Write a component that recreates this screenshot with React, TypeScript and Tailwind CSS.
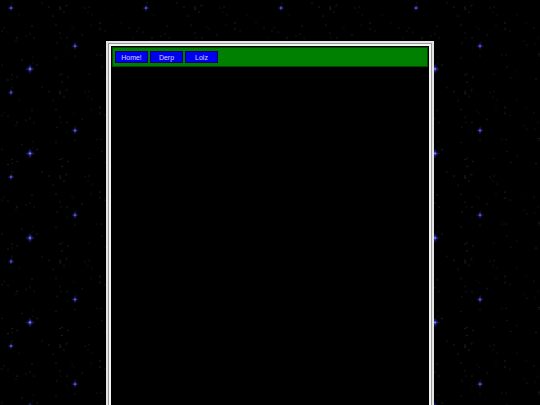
import React from "react";

// dim specks inside one background tile (135 x 84.5), fixed so every run looks the same
const specks: [number, number, number][] = [];
let seed = 7;
const rnd = () => {
  seed = (seed * 9301 + 49297) % 233280;
  return seed / 233280;
};
for (let i = 0; i < 70; i++) {
  specks.push([Math.round(rnd() * 134) + 0.5, Math.round(rnd() * 84) + 0.5, 0.15 + rnd() * 0.3]);
}

function Star({ x, y, size }: { x: number; y: number; size: number }) {
  return (
    <g>
      <circle cx={x} cy={y} r={size * 1.8} fill="url(#glow)" />
      <line x1={x - size * 2.2} y1={y} x2={x + size * 2.2} y2={y} stroke="#4848ff" strokeWidth={0.6} strokeOpacity={0.6} />
      <line x1={x} y1={y - size * 2.2} x2={x} y2={y + size * 2.2} stroke="#4848ff" strokeWidth={0.6} strokeOpacity={0.6} />
      <circle cx={x} cy={y} r={size * 0.4} fill="#a0a0ff" />
    </g>
  );
}

function StarField() {
  return (
    <svg className="absolute inset-0 h-full w-full" xmlns="http://www.w3.org/2000/svg">
      <defs>
        <radialGradient id="glow">
          <stop offset="0%" stopColor="#5c5cff" stopOpacity="0.9" />
          <stop offset="100%" stopColor="#2020a0" stopOpacity="0" />
        </radialGradient>
        <pattern id="stars" width="135" height="84.5" patternUnits="userSpaceOnUse">
          {specks.map(([x, y, o], i) => (
            <rect key={i} x={x} y={y} width="1" height="1" fill="#8a8aa0" opacity={o} />
          ))}
          <Star x={11} y={8} size={1.3} />
          <Star x={75} y={46} size={1.5} />
          <Star x={30} y={69} size={2} />
        </pattern>
      </defs>
      <rect width="100%" height="100%" fill="#000" />
      <rect width="100%" height="100%" fill="url(#stars)" />
    </svg>
  );
}

const links = ["Home!", "Derp", "Lolz"];

export default function App() {
  return (
    <div className="relative h-[405px] w-full overflow-hidden bg-black font-['Liberation_Sans',Arial,sans-serif]">
      <StarField />
      <div className="relative flex justify-center pt-[41px]">
        <div className="h-[380px] w-[328px] border-2 border-[#e4e4e4]">
          <div className="h-full border border-[#9a9a9a]">
            <div className="h-full border-2 border-[#f4f4f4] bg-black p-px">
              <nav className="flex gap-[2px] border border-[#004a00] bg-[#008000] px-[2px] py-[3px]">
                {links.map((label) => (
                  <a
                    key={label}
                    href="#"
                    className="flex h-[12px] w-[33px] items-center justify-center border border-[#00006a] bg-[#0000f0] text-[7px] leading-none text-[#d4d4ff]"
                  >
                    {label}
                  </a>
                ))}
              </nav>
            </div>
          </div>
        </div>
      </div>
    </div>
  );
}
